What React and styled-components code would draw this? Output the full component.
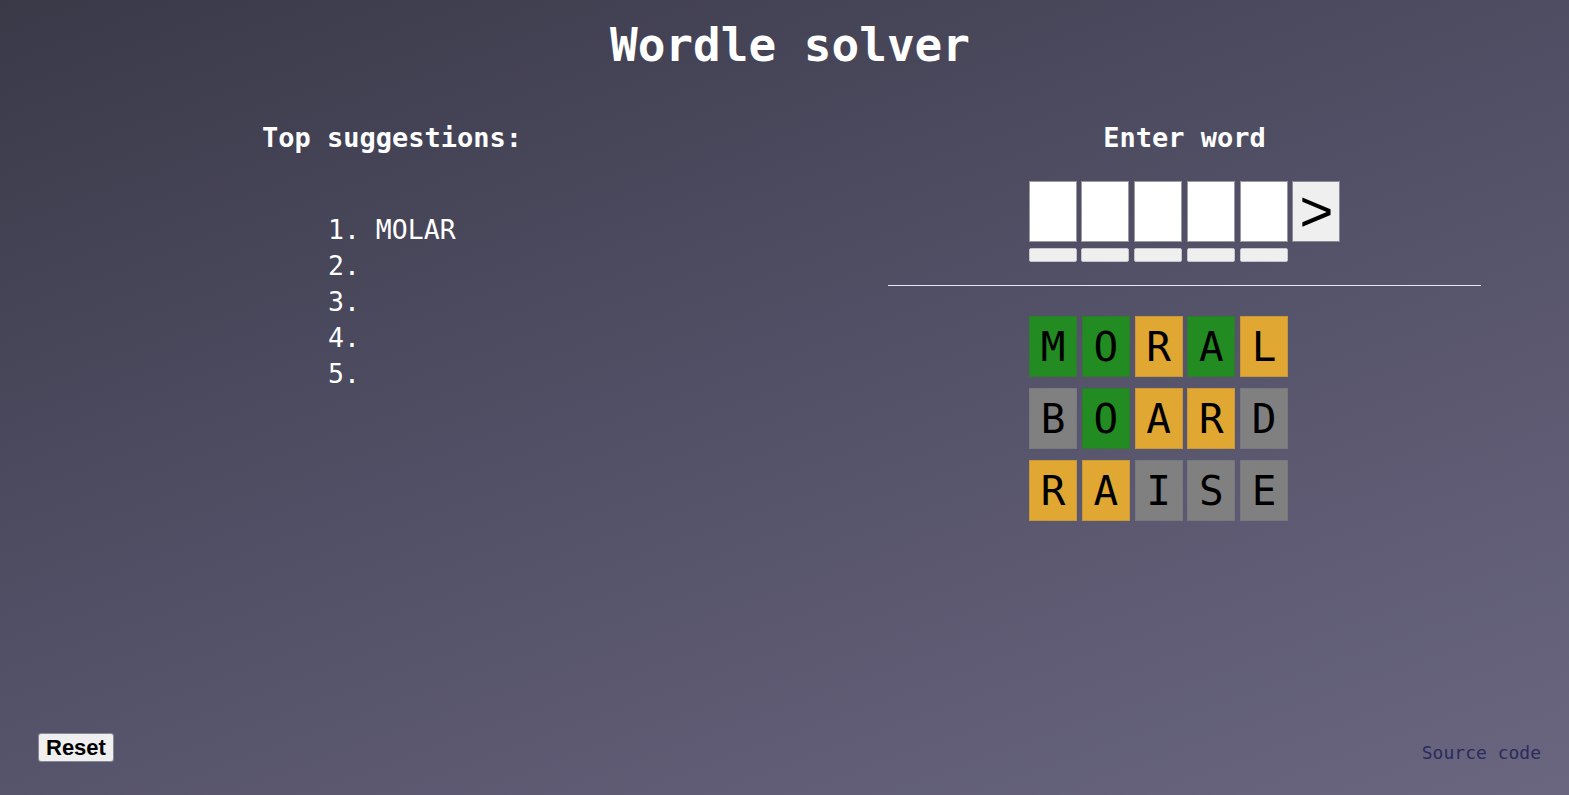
import React from 'react'
import styled, { createGlobalStyle } from 'styled-components'

const GlobalStyle = createGlobalStyle`
  html, body {
    margin: 0;
    padding: 0;
  }
  body {
    font-family: "DejaVu Sans Mono", "Liberation Mono", monospace;
    color: white;
  }
`;

const Page = styled.div`
  min-height: 100vh;
  box-sizing: border-box;
  display: flex;
  flex-direction: column;
  background: linear-gradient(160deg, #3a3948 0%, #55536a 55%, #6a6680 100%);
`;

const Title = styled.h1`
  margin: 17px 0 0;
  padding-left: 11px;
  font-size: 46px;
  line-height: 56px;
  font-weight: bold;
  text-align: center;
`;

const Columns = styled.main`
  flex: 1;
  display: grid;
  grid-template-columns: 784px 1fr;
  column-gap: 16px;
`;

const Column = styled.section`
  display: flex;
  flex-direction: column;
  align-items: center;
`;

const Heading = styled.h2`
  margin: 48px 0 0;
  font-size: 27px;
  line-height: 34px;
  font-weight: bold;
`;

const Suggestions = styled.ol`
  align-self: stretch;
  margin: 57px 0 0;
  padding: 0 0 0 328px;
  list-style: none;
  font-size: 26.5px;
  line-height: 36px;
`;

const Suggestion = styled.li`
  white-space: pre;
`;

const Board = styled.div`
  display: flex;
  flex-direction: column;
  align-items: center;
  align-self: stretch;
`;

const TileRow = styled.div`
  display: flex;
  gap: 4.75px;
  margin-top: ${(p) => p.$top || 0}px;
`;

const InputSlot = styled.div`
  display: flex;
  flex-direction: column;
  gap: 6px;
`;

const LetterInput = styled.div`
  width: 48px;
  height: 61px;
  box-sizing: border-box;
  background: white;
  border: 1px solid #9a9aa4;
`;

const StateBar = styled.div`
  width: 48px;
  height: 14px;
  box-sizing: border-box;
  background: #efefef;
  border: 1px solid #c4c4cc;
  border-radius: 2px;
`;

const SubmitButton = styled.button`
  width: 48px;
  height: 61px;
  box-sizing: border-box;
  padding: 0 0 4px;
  background: #efefef;
  border: 1px solid #8a8a94;
  font-family: "Liberation Sans", Arial, sans-serif;
  font-size: 58px;
  line-height: 1;
  color: black;
`;

const Divider = styled.hr`
  width: 593px;
  margin: 23px 0 0;
  border: 0;
  border-top: 1px solid #e8e8ee;
`;

const Guesses = styled.div`
  width: 311px;
  display: flex;
  flex-direction: column;
  gap: 11px;
  margin-top: 30px;
`;

const tileColors = {
  g: ['#228b22', '#2f7a2c'],
  y: ['#e0a733', '#c8973a'],
  x: ['#808080', '#787880'],
};

const Tile = styled.div`
  width: 48px;
  height: 61px;
  box-sizing: border-box;
  display: flex;
  align-items: center;
  justify-content: center;
  background: ${(p) => tileColors[p.$state][0]};
  border: 1px solid ${(p) => tileColors[p.$state][1]};
  color: black;
  font-size: 41px;
`;

const Footer = styled.footer`
  display: flex;
  justify-content: space-between;
  align-items: flex-end;
  padding: 0 28px 33px 38px;
`;

const ResetButton = styled.button`
  padding: 2px 7px;
  background: #efefef;
  border: 1px solid #8a8a94;
  border-radius: 3px;
  font-family: "Liberation Sans", Arial, sans-serif;
  font-size: 22px;
  line-height: 23px;
  font-weight: bold;
  color: black;
`;

const SourceLink = styled.a`
  font-size: 18px;
  line-height: 21px;
  color: #2b2a5c;
  text-decoration: none;
  margin-bottom: -1px;
`;

const guesses = [
  { word: 'MORAL', states: 'ggygy' },
  { word: 'BOARD', states: 'xgyyx' },
  { word: 'RAISE', states: 'yyxxx' },
];

const suggestions = ['MOLAR', '', '', '', ''];

const App = () => {
  return (
    <Page>
      <GlobalStyle />
      <Title>Wordle solver</Title>
      <Columns>
        {/* LEFT: suggestions */}
        <Column>
          <Heading>Top suggestions:</Heading>
          <Suggestions>
            {suggestions.map((s, i) => (
              <Suggestion key={i}>{`${i + 1}. ${s}`}</Suggestion>
            ))}
          </Suggestions>
        </Column>

        {/* RIGHT: input and guesses */}
        <Column>
          <Heading>Enter word</Heading>
          <Board>
            <TileRow $top={26}>
              {[0, 1, 2, 3, 4].map((i) => (
                <InputSlot key={i}>
                  <LetterInput />
                  <StateBar />
                </InputSlot>
              ))}
              <SubmitButton>&gt;</SubmitButton>
            </TileRow>
            <Divider />
            <Guesses>
              {guesses.map((g) => (
                <TileRow key={g.word}>
                  {g.word.split('').map((ch, i) => (
                    <Tile key={i} $state={g.states[i]}>
                      {ch}
                    </Tile>
                  ))}
                </TileRow>
              ))}
            </Guesses>
          </Board>
        </Column>
      </Columns>
      <Footer>
        <ResetButton>Reset</ResetButton>
        <SourceLink href="#">Source code</SourceLink>
      </Footer>
    </Page>
  )
}

export default App
